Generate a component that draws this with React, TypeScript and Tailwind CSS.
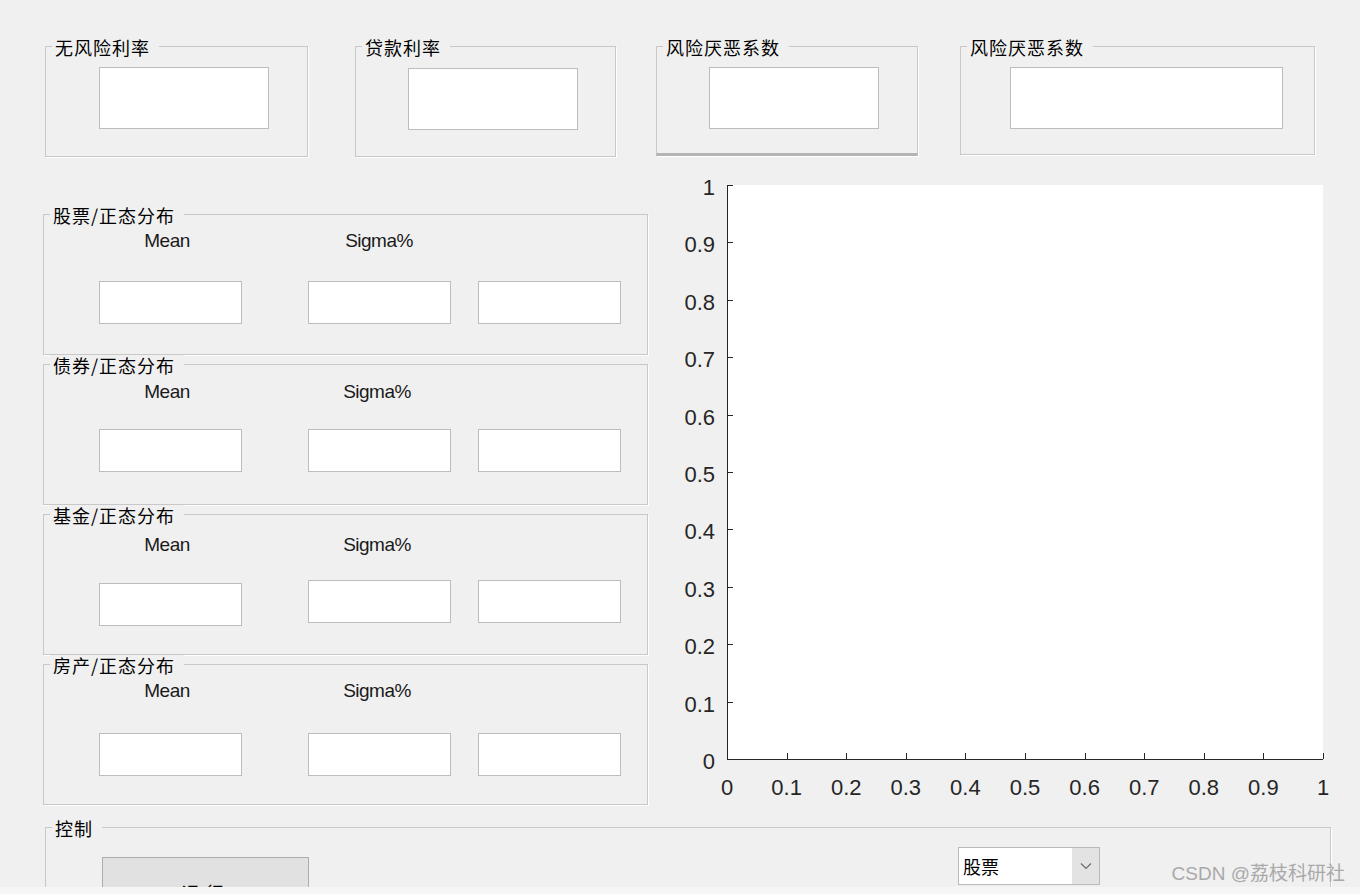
import React from "react";

const cjk = "font-['Noto_Sans_CJK_SC',sans-serif]";
const latin = "font-['Liberation_Sans','Noto_Sans_CJK_SC',sans-serif]";

function Group({
  title,
  className,
  children,
}: {
  title: string;
  className: string;
  children?: React.ReactNode;
}) {
  return (
    <div className={`relative border border-[#c8c8c8] shadow-[1px_1px_0_#ffffff] ${className}`}>
      <span
        className={`absolute -top-[10px] left-[6px] bg-[#f0f0f0] pl-[3px] pr-[9px] text-[18px] leading-[20px] tracking-[1px] text-black ${cjk}`}
      >
        {title}
      </span>
      {children}
    </div>
  );
}

function Box({ className }: { className: string }) {
  return <div className={`bg-white border border-[#bdbdbd] ${className}`} />;
}

type PanelCfg = {
  title: string;
  labelMt: string;
  sigmaMl: string;
  rowMt: string;
  meanExtra: string;
};

const panels: PanelCfg[] = [
  { title: "股票/正态分布", labelMt: "mt-[15px]", sigmaMl: "ml-[72px]", rowMt: "mt-[29px]", meanExtra: "" },
  { title: "债券/正态分布", labelMt: "mt-[16px]", sigmaMl: "ml-[70px]", rowMt: "mt-[26px]", meanExtra: "" },
  { title: "基金/正态分布", labelMt: "mt-[19px]", sigmaMl: "ml-[70px]", rowMt: "mt-[24px]", meanExtra: "mt-[3px]" },
  { title: "房产/正态分布", labelMt: "mt-[15px]", sigmaMl: "ml-[70px]", rowMt: "mt-[31px]", meanExtra: "" },
];

function Panel({ cfg }: { cfg: PanelCfg }) {
  return (
    <Group title={cfg.title} className="w-[605px] h-[141px]">
      <div className="flex flex-col">
        <div className={`flex ${cfg.labelMt} text-[19px] leading-[22px] text-[#1a1a1a] ${latin}`}>
          <div className="ml-[53px] w-[140px] text-center tracking-[-0.5px]">Mean</div>
          <div className={`${cfg.sigmaMl} w-[140px] text-center tracking-[-0.5px]`}>Sigma%</div>
        </div>
        <div className={`flex items-start ${cfg.rowMt}`}>
          <Box className={`ml-[55px] w-[143px] h-[43px] ${cfg.meanExtra}`} />
          <Box className="ml-[66px] w-[143px] h-[43px]" />
          <Box className="ml-[27px] w-[143px] h-[43px]" />
        </div>
      </div>
    </Group>
  );
}

function Chart() {
  const x0 = 67;
  const x1 = 663;
  const y0 = 589;
  const y1 = 15;
  const ticks = Array.from({ length: 11 }, (_, i) => i);
  const yPos = (i: number) => y0 - (i * (y0 - y1)) / 10;
  const xPos = (i: number) => x0 + (i * (x1 - x0)) / 10;
  const lbl = (i: number) => (i === 0 ? "0" : i === 10 ? "1" : `0.${i}`);
  return (
    <svg width={690} height={630} className={`ml-[12px] mt-[13px] shrink-0 ${latin}`}>
      <rect x={x0} y={y1} width={x1 - x0} height={y0 - y1} fill="#ffffff" />
      <g stroke="#262626" strokeWidth={1} shapeRendering="crispEdges">
        <line x1={x0 + 0.5} y1={y1} x2={x0 + 0.5} y2={y0 + 0.5} />
        <line x1={x0} y1={y0 + 0.5} x2={x1} y2={y0 + 0.5} />
        {ticks.map((i) => (
          <line key={`y${i}`} x1={x0} y1={Math.round(yPos(i)) + 0.5} x2={x0 + 6} y2={Math.round(yPos(i)) + 0.5} />
        ))}
        {ticks.map((i) => (
          <line key={`x${i}`} x1={Math.round(xPos(i)) + 0.5} y1={y0} x2={Math.round(xPos(i)) + 0.5} y2={y0 - 6} />
        ))}
      </g>
      <g fill="#262626" fontSize={22}>
        {ticks.map((i) => (
          <text key={`yl${i}`} x={55} y={yPos(i) + 10} textAnchor="end">
            {lbl(i)}
          </text>
        ))}
        {ticks.map((i) => (
          <text key={`xl${i}`} x={xPos(i)} y={625} textAnchor="middle">
            {lbl(i)}
          </text>
        ))}
      </g>
    </svg>
  );
}

export default function App() {
  return (
    <div className={`relative w-[1360px] h-[894px] bg-[#f0f0f0] ${latin}`}>
      <div className="h-[887px] overflow-hidden flex flex-col">
        {/* top row */}
        <div className="flex items-start pt-[46px] shrink-0">
          <Group title="无风险利率" className="ml-[45px] w-[263px] h-[111px]">
            <Box className="ml-[53px] mt-[20px] w-[170px] h-[62px]" />
          </Group>
          <Group title="贷款利率" className="ml-[47px] w-[261px] h-[111px]">
            <Box className="ml-[52px] mt-[21px] w-[170px] h-[62px]" />
          </Group>
          <Group
            title="风险厌恶系数"
            className="ml-[40px] w-[262px] h-[110px] border-b-[3px] border-b-[#b4b4b4]"
          >
            <Box className="ml-[52px] mt-[20px] w-[170px] h-[62px]" />
          </Group>
          <Group title="风险厌恶系数" className="ml-[42px] w-[355px] h-[109px]">
            <Box className="ml-[49px] mt-[20px] w-[273px] h-[62px]" />
          </Group>
        </div>

        {/* middle */}
        <div className="flex items-start shrink-0">
          <div className="ml-[43px] mt-[57px] flex flex-col gap-[9px]">
            {panels.map((p) => (
              <Panel key={p.title} cfg={p} />
            ))}
          </div>
          <Chart />
        </div>

        {/* control */}
        <Group title="控制" className="ml-[45px] mt-[22px] w-[1286px] h-[140px] shrink-0">
          <div className="flex items-start">
            <div
              className={`ml-[56px] mt-[29px] w-[207px] h-[70px] bg-[#e1e1e1] border border-[#adadad] flex items-center justify-center text-[18px] tracking-[6px] text-black ${cjk}`}
            >
              运行
            </div>
            <div className="ml-[649px] mt-[19px] w-[142px] h-[38px] bg-white border border-[#b9b9b9] flex">
              <div className={`flex-1 pl-[4px] flex items-center text-[18px] text-black ${cjk}`}>股票</div>
              <div className="w-[27px] bg-[#e3e3e3] flex items-center justify-center">
                <svg width="12" height="8" viewBox="0 0 12 8">
                  <path d="M1 1.5 L6 6.5 L11 1.5" fill="none" stroke="#6b6b6b" strokeWidth="1.2" />
                </svg>
              </div>
            </div>
          </div>
        </Group>
      </div>
      <div className="h-[7px] bg-[#f6f6f6]" />
      <div
        className={`absolute right-[15px] top-[863px] text-[19px] leading-[22px] text-[#a9a9a9] ${latin}`}
      >
        CSDN @荔枝科研社
      </div>
    </div>
  );
}
